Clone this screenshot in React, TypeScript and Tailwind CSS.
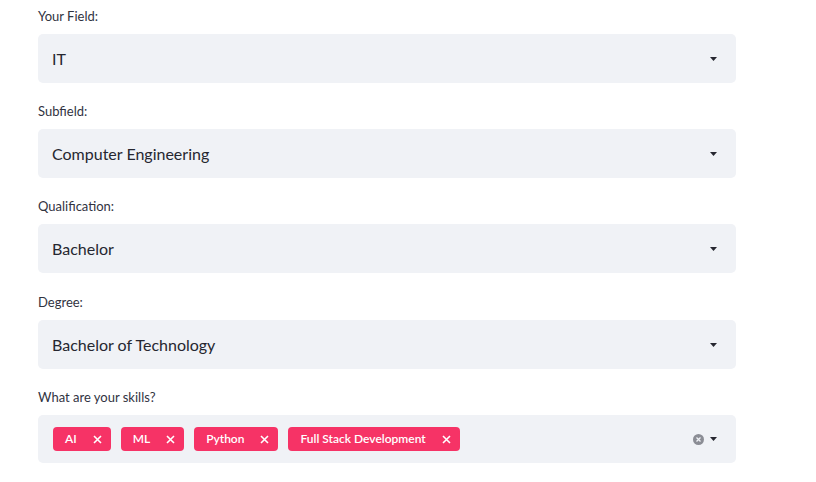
import React from 'react';

const Caret: React.FC = () => (
  <svg width="7" height="4" viewBox="0 0 7 4" className="shrink-0">
    <path d="M0 0 H7 L3.5 4 Z" fill="#262730" />
  </svg>
);

const SelectField: React.FC<{ label: string; value: string }> = ({ label, value }) => (
  <div className="mb-[17px]">
    <label className="block h-[22px] leading-[22px] text-[13px] text-[#31333f]">{label}</label>
    <div className="mt-[7px] h-[49px] rounded-[5px] bg-[#f0f2f6] flex items-center pl-[14px] pr-[19px]">
      <span className="flex-1 text-[16px] text-[#262730]">{value}</span>
      <Caret />
    </div>
  </div>
);

const Tag: React.FC<{ text: string }> = ({ text }) => (
  <span className="h-[24px] rounded-[4px] bg-[#f63366] text-white text-[12px] font-semibold flex items-center pl-[12px] pr-[9px] gap-[16px]">
    {text}
    <svg width="9" height="9" viewBox="0 0 9 9">
      <path d="M1 1 L8 8 M8 1 L1 8" stroke="white" strokeWidth="1.6" />
    </svg>
  </span>
);

const App: React.FC = () => {
  const skills = ['AI', 'ML', 'Python', 'Full Stack Development'];
  return (
    <div className="w-[816px] h-[482px] bg-white pl-[38px] pt-[5px]" style={{ fontFamily: '"Source Sans Pro", Lato, "Noto Sans", sans-serif' }}>
      <div className="w-[698px]">
        <SelectField label="Your Field:" value="IT" />
        <SelectField label="Subfield:" value="Computer Engineering" />
        <SelectField label="Qualification:" value="Bachelor" />
        <div className="h-px" />
        <SelectField label="Degree:" value="Bachelor of Technology" />
        <div>
          <label className="block h-[22px] leading-[22px] text-[13px] text-[#31333f]">What are your skills?</label>
          <div className="mt-[7px] h-[48px] rounded-[5px] bg-[#f0f2f6] flex items-center pl-[15px] pr-[19px]">
            <div className="flex-1 flex gap-[10px]">
              {skills.map((s) => (
                <Tag key={s} text={s} />
              ))}
            </div>
            <svg width="11" height="11" viewBox="0 0 11 11" className="mr-[6px]">
              <circle cx="5.5" cy="5.5" r="5.5" fill="#8b8d95" />
              <path d="M3.5 3.5 L7.5 7.5 M7.5 3.5 L3.5 7.5" stroke="#f0f2f6" strokeWidth="1.3" />
            </svg>
            <Caret />
          </div>
        </div>
      </div>
    </div>
  );
};

export default App;
